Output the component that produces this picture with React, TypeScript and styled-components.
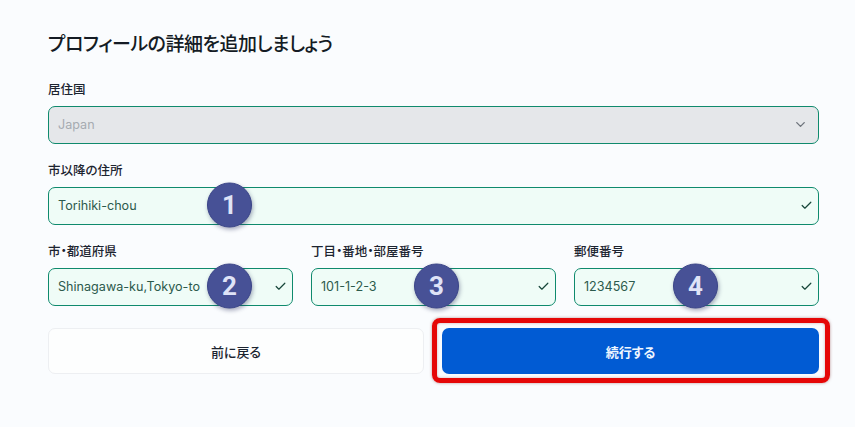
import React from "react";
import styled, { createGlobalStyle } from "styled-components";
import { Check, ChevronDown } from "lucide-react";

const GlobalStyle = createGlobalStyle`
  html, body {
    margin: 0;
    padding: 0;
    background: #fafcfe;
  }
  body {
    font-family: Inter, "Noto Sans CJK JP", sans-serif;
    font-feature-settings: "palt";
    color: #1c2430;
  }
`;

const Page = styled.main`
  width: 855px;
  height: 427px;
  box-sizing: border-box;
  padding: 31px 36px 0 48px;
  overflow: hidden;
`;

const Title = styled.h1`
  margin: 0 0 22px;
  font-size: 19px;
  line-height: 28px;
  font-weight: 500;
  letter-spacing: -0.5px;
  color: #141b24;
`;

const Form = styled.form`
  display: flex;
  flex-direction: column;
`;

const Field = styled.div`
  display: flex;
  flex-direction: column;
  gap: 8px;
  min-width: 0;
`;

const FieldRow = styled.div`
  display: grid;
  grid-template-columns: repeat(3, 1fr);
  gap: 18px;
`;

const Stack = styled.div`
  display: flex;
  flex-direction: column;
  gap: 18px;
`;

const Label = styled.label`
  font-size: 12.5px;
  line-height: 17px;
  font-weight: 500;
  color: #1c2430;
`;

const InputBox = styled.div<{ $disabled?: boolean }>`
  position: relative;
  display: flex;
  align-items: center;
  justify-content: space-between;
  box-sizing: border-box;
  height: 38px;
  padding: 0 9px 2px;
  border: 1px solid #0f8a6d;
  border-radius: 7px;
  background: ${({ $disabled }) => ($disabled ? "#e5e7ea" : "#effcf7")};
  color: ${({ $disabled }) => ($disabled ? "#a6abb1" : "#2c5a4c")};
  font-size: 12.6px;
`;

const CheckIcon = styled(Check)`
  flex: none;
  margin-right: -4px;
  color: #17463a;
`;

const ChevronIcon = styled(ChevronDown)`
  flex: none;
  margin-right: 1px;
  color: #6e747c;
`;

const Badge = styled.span<{ $left: number }>`
  position: absolute;
  left: ${({ $left }) => $left}px;
  top: 50%;
  width: 45px;
  height: 45px;
  margin-top: -1.5px;
  transform: translateY(-50%);
  display: flex;
  align-items: center;
  justify-content: center;
  box-sizing: border-box;
  border: 1px solid #3a4488;
  border-radius: 50%;
  background: #475196;
  box-shadow: 1px 2px 4px rgba(40, 46, 90, 0.4);
  color: #dfe3f7;
  font-family: Roboto, sans-serif;
  font-size: 26px;
  font-weight: 700;
`;

const Actions = styled.div`
  display: grid;
  grid-template-columns: 376px 1fr;
  gap: 18px;
  margin-top: 22px;
`;

const BackButton = styled.button`
  height: 46px;
  border: 1px solid #edeff2;
  border-radius: 7px;
  background: #fdfefe;
  color: #1c2430;
  font: inherit;
  font-size: 13px;
  font-weight: 500;
`;

const ContinueWrap = styled.div`
  position: relative;
  display: flex;
`;

const ContinueButton = styled.button`
  flex: 1;
  height: 46px;
  border: 0;
  border-radius: 7px;
  background: #015bd3;
  color: #eef6ff;
  font: inherit;
  font-size: 13px;
  font-weight: 600;
`;

const Highlight = styled.span`
  position: absolute;
  inset: -10px -11px -9px -10px;
  border: 5px solid #e50707;
  border-radius: 8px;
  box-shadow: 0 0 3px rgba(120, 40, 40, 0.5), inset 0 0 3px rgba(120, 40, 40, 0.35);
  pointer-events: none;
`;

type FieldDef = {
  label: string;
  value: string;
  badge: number;
  badgeLeft: number;
};

const cityFields: FieldDef[] = [
  { label: "市・都道府県", value: "Shinagawa-ku,Tokyo-to", badge: 2, badgeLeft: 158 },
  { label: "丁目・番地・部屋番号", value: "101-1-2-3", badge: 3, badgeLeft: 102 },
  { label: "郵便番号", value: "1234567", badge: 4, badgeLeft: 98 },
];

const ValidField: React.FC<FieldDef> = ({ label, value, badge, badgeLeft }) => (
  <Field>
    <Label>{label}</Label>
    <InputBox>
      {value}
      <Badge $left={badgeLeft}>{badge}</Badge>
      <CheckIcon size={13} strokeWidth={2.2} />
    </InputBox>
  </Field>
);

const App: React.FC = () => (
  <Page>
    <GlobalStyle />
    <Title>プロフィールの詳細を追加しましょう</Title>
    <Form>
      <Stack>
        <Field>
          <Label>居住国</Label>
          <InputBox $disabled>
            Japan
            <ChevronIcon size={15} strokeWidth={2.2} />
          </InputBox>
        </Field>
        <ValidField label="市以降の住所" value="Torihiki-chou" badge={1} badgeLeft={158} />
        <FieldRow>
          {cityFields.map((field) => (
            <ValidField key={field.badge} {...field} />
          ))}
        </FieldRow>
      </Stack>
      <Actions>
        <BackButton type="button">前に戻る</BackButton>
        <ContinueWrap>
          <ContinueButton type="button">続行する</ContinueButton>
          <Highlight />
        </ContinueWrap>
      </Actions>
    </Form>
  </Page>
);

export default App;
